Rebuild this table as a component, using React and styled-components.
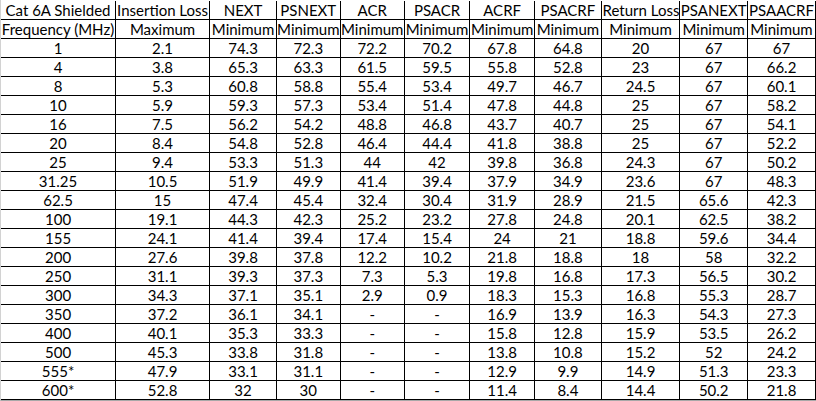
import React from 'react';
import styled, { createGlobalStyle } from 'styled-components';

const GlobalStyle = createGlobalStyle`
  html, body {
    margin: 0;
    padding: 0;
    background: #ffffff;
  }
`;

// Column widths, each one counting its own right border
const COLUMNS = [116, 95, 69, 62, 65, 66, 66, 68, 68, 68, 69];

const HEAD_TITLES = [
  'Cat 6A Shielded',
  'Insertion Loss',
  'NEXT',
  'PSNEXT',
  'ACR',
  'PSACR',
  'ACRF',
  'PSACRF',
  'Return Loss',
  'PSANEXT',
  'PSAACRF',
];

const HEAD_UNITS = [
  'Frequency (MHz)',
  'Maximum',
  'Minimum',
  'Minimum',
  'Minimum',
  'Minimum',
  'Minimum',
  'Minimum',
  'Minimum',
  'Minimum',
  'Minimum',
];

const ROWS = [
  ['1', '2.1', '74.3', '72.3', '72.2', '70.2', '67.8', '64.8', '20', '67', '67'],
  ['4', '3.8', '65.3', '63.3', '61.5', '59.5', '55.8', '52.8', '23', '67', '66.2'],
  ['8', '5.3', '60.8', '58.8', '55.4', '53.4', '49.7', '46.7', '24.5', '67', '60.1'],
  ['10', '5.9', '59.3', '57.3', '53.4', '51.4', '47.8', '44.8', '25', '67', '58.2'],
  ['16', '7.5', '56.2', '54.2', '48.8', '46.8', '43.7', '40.7', '25', '67', '54.1'],
  ['20', '8.4', '54.8', '52.8', '46.4', '44.4', '41.8', '38.8', '25', '67', '52.2'],
  ['25', '9.4', '53.3', '51.3', '44', '42', '39.8', '36.8', '24.3', '67', '50.2'],
  ['31.25', '10.5', '51.9', '49.9', '41.4', '39.4', '37.9', '34.9', '23.6', '67', '48.3'],
  ['62.5', '15', '47.4', '45.4', '32.4', '30.4', '31.9', '28.9', '21.5', '65.6', '42.3'],
  ['100', '19.1', '44.3', '42.3', '25.2', '23.2', '27.8', '24.8', '20.1', '62.5', '38.2'],
  ['155', '24.1', '41.4', '39.4', '17.4', '15.4', '24', '21', '18.8', '59.6', '34.4'],
  ['200', '27.6', '39.8', '37.8', '12.2', '10.2', '21.8', '18.8', '18', '58', '32.2'],
  ['250', '31.1', '39.3', '37.3', '7.3', '5.3', '19.8', '16.8', '17.3', '56.5', '30.2'],
  ['300', '34.3', '37.1', '35.1', '2.9', '0.9', '18.3', '15.3', '16.8', '55.3', '28.7'],
  ['350', '37.2', '36.1', '34.1', '-', '-', '16.9', '13.9', '16.3', '54.3', '27.3'],
  ['400', '40.1', '35.3', '33.3', '-', '-', '15.8', '12.8', '15.9', '53.5', '26.2'],
  ['500', '45.3', '33.8', '31.8', '-', '-', '13.8', '10.8', '15.2', '52', '24.2'],
  ['555*', '47.9', '33.1', '31.1', '-', '-', '12.9', '9.9', '14.9', '51.3', '23.3'],
  ['600*', '52.8', '32', '30', '-', '-', '11.4', '8.4', '14.4', '50.2', '21.8'],
];

const Frame = styled.div`
  display: inline-block;
  padding-top: 1px;
  border-left: 1px solid #d2d2d2;
  border-bottom: 1px solid #a8a8a8;
`;

const Sheet = styled.table`
  border-collapse: separate;
  border-spacing: 0;
  table-layout: fixed;
  font-family: Lato, 'Open Sans', sans-serif;
  font-size: 15px;
  color: #000000;
`;

const Col = styled.col`
  width: ${(p) => p.$width}px;
`;

const Cell = styled.td`
  box-sizing: border-box;
  height: 19px;
  padding: ${(p) => (p.$clip ? '0 0 0 1px' : '0')};
  border-right: 1px solid #000000;
  border-bottom: 1px solid #000000;
  text-align: ${(p) => (p.$clip ? 'left' : 'center')};
  vertical-align: bottom;
  line-height: 17px;
  white-space: nowrap;
  overflow: hidden;
  text-overflow: clip;
`;

const App = () => (
  <>
    <GlobalStyle />
    <Frame>
      <Sheet>
        <colgroup>
          {COLUMNS.map((w, i) => (
            <Col key={i} $width={w} />
          ))}
        </colgroup>
        <tbody>
          <tr>
            {HEAD_TITLES.map((t, i) => (
              <Cell key={i} $clip={t === 'Return Loss'}>
                {t}
              </Cell>
            ))}
          </tr>
          <tr>
            {HEAD_UNITS.map((t, i) => (
              <Cell key={i}>{t}</Cell>
            ))}
          </tr>
          {ROWS.map((row, r) => (
            <tr key={r}>
              {row.map((v, i) => (
                <Cell key={i}>{v}</Cell>
              ))}
            </tr>
          ))}
        </tbody>
      </Sheet>
    </Frame>
  </>
);

export default App;
